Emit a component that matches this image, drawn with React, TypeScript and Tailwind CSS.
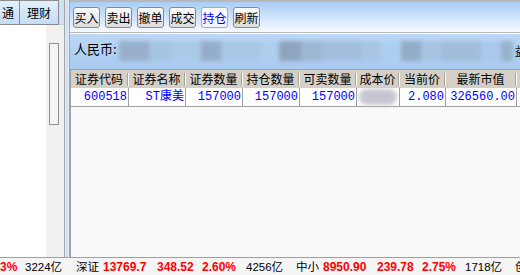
const cjk = "font-['Noto_Sans_CJK_SC',sans-serif]"

const buttons = [
  { label: "买入", active: false },
  { label: "卖出", active: false },
  { label: "撤单", active: false },
  { label: "成交", active: false },
  { label: "持仓", active: true },
  { label: "刷新", active: false },
]

const columns = [
  { title: "证券代码", w: "w-[58px]", value: "600518" },
  { title: "证券名称", w: "w-[57px]", value: "ST康美" },
  { title: "证券数量", w: "w-[57px]", value: "157000" },
  { title: "持仓数量", w: "w-[57px]", value: "157000" },
  { title: "可卖数量", w: "w-[57px]", value: "157000" },
  { title: "成本价", w: "w-[43px]", value: "" },
  { title: "当前价", w: "w-[46px]", value: "2.080" },
  { title: "最新市值", w: "w-[71px]", value: "326560.00" },
]

// blurred account figures in the 人民币 strip
const blurs = [
  { w: "w-[30px]", c: "bg-[#97afcb]" },
  { w: "w-[22px]", c: "bg-[#a6c3e2]" },
  { w: "w-[30px]", c: "bg-[#abc9e8]" },
  { w: "w-[20px]", c: "bg-[#94adcb]" },
  { w: "w-[40px]", c: "bg-[#a9c6e6]" },
  { w: "w-[18px]", c: "bg-[#b0cdee]" },
  { w: "w-[22px]", c: "bg-[#8fa4be]" },
  { w: "w-[20px]", c: "bg-[#9db6d3]" },
  { w: "w-[40px]", c: "bg-[#a3bedc]" },
  { w: "w-[20px]", c: "bg-[#a9c5e4]" },
  { w: "w-[20px]", c: "bg-[#accff1]" },
  { w: "w-[20px]", c: "bg-[#93acc8]" },
  { w: "w-[20px]", c: "bg-[#a6c3e2]" },
  { w: "w-[40px]", c: "bg-[#a2bdda]" },
  { w: "w-[20px]", c: "bg-[#a9c8ea]" },
  { w: "w-[12px]", c: "bg-[#98b2cd]" },
]

const status = [
  { t: "3%", w: "w-[25px]", red: true },
  { t: "3224亿", w: "w-[51px]", red: false },
  { t: "深证", w: "w-[27px]", red: false },
  { t: "13769.7", w: "w-[54px]", red: true },
  { t: "348.52", w: "w-[45px]", red: true },
  { t: "2.60%", w: "w-[44px]", red: true },
  { t: "4256亿", w: "w-[50px]", red: false },
  { t: "中小", w: "w-[27px]", red: false },
  { t: "8950.90", w: "w-[54px]", red: true },
  { t: "239.78", w: "w-[45px]", red: true },
  { t: "2.75%", w: "w-[43px]", red: true },
  { t: "1718亿", w: "w-[50px]", red: false },
  { t: "创", w: "w-[20px]", red: false },
]

export default function App() {
  return (
    <div className="w-[520px] h-[275px] flex flex-col overflow-hidden bg-white font-['Liberation_Sans','Noto_Sans_CJK_SC',sans-serif] text-black">

      <div className="flex h-[257px]">

        {/* left panel */}
        <div className="w-[64px] shrink-0 flex flex-col">
          <div className="h-[25px] flex bg-[#cde2f8] border-b border-[#b9cfe6]">
            <div className={`w-[21px] h-[25px] -ml-[1px] border border-[#8c8c8c] bg-gradient-to-b from-[#e4f0fc] to-[#c4dcf6] flex items-center justify-end pr-[5px] text-[12px] ${cjk}`}>
              通
            </div>
            <div className={`w-[39px] h-[25px] border border-l-0 border-[#8c8c8c] bg-gradient-to-b from-[#e4f0fc] to-[#c4dcf6] flex items-center justify-center text-[12px] ${cjk}`}>
              理财
            </div>
          </div>
          <div className="flex-1 flex">
            <div className="w-[46px] bg-white" />
            <div className="flex-1 bg-[#f2f1f0] pt-[18px] pl-[3px]">
              <div className="w-[10px] h-[82px] border border-[#8e8e8e] bg-[#f4f4f4]" />
            </div>
          </div>
        </div>

        {/* splitter */}
        <div className="w-[6px] shrink-0 border-l border-r border-[#a4a4a4] bg-gradient-to-r from-[#e8f0fa] via-[#c6dbf4] to-[#eaf2fb]" />

        {/* right panel */}
        <div className="flex-1 flex flex-col min-w-0">

          <div className="h-[33px] border-t-2 border-[#b8b8b8] border-b bg-gradient-to-b from-[#a8cdf4] to-[#f6faff] flex items-start gap-[5px] pl-[3px] pt-[5px]">
            {buttons.map((b) => (
              <div
                key={b.label}
                className={`w-[27px] h-[21px] rounded-[3px] border flex items-center justify-center text-[12px] ${cjk} ${
                  b.active
                    ? "border-[#9ab0c8] bg-gradient-to-b from-white to-[#eef3f9] text-[#0000ff]"
                    : "border-[#8a8a8a] bg-gradient-to-b from-[#fbfbfb] to-[#dcdcdc]"
                }`}
              >
                {b.label}
              </div>
            ))}
          </div>

          <div className="h-[36px] bg-gradient-to-b from-[#bcd8f5] to-[#a8cbf0] border-t border-white flex items-start pt-[6px] pl-[4px] overflow-hidden">
            <span className={`text-[13px] leading-[16px] mt-[1px] shrink-0 ${cjk}`}>人民币:</span>
            <div className="flex mt-[1px] ml-[2px] h-[20px] blur-[2px]">
              {blurs.map((b, i) => (
                <div key={i} className={`${b.w} ${b.c} h-full`} />
              ))}
            </div>
            <span className={`shrink-0 ml-[2px] mt-[4px] text-[12px] leading-[14px] ${cjk}`}>益</span>
          </div>

          <div className="flex-1 bg-[#f9f9f9] border-l border-[#a0a0a0] border-t border-t-[#a0a0a0] flex flex-col">

            <div className="h-[18px] flex bg-[#d4d0c8]">
              {columns.map((c) => (
                <div key={c.title} className={`${c.w} shrink-0 flex items-center`}>
                  <span className={`flex-1 text-center text-[12px] leading-[18px] whitespace-nowrap ${cjk}`}>{c.title}</span>
                  <span className="w-[2px] h-[13px] border-l border-[#a8a49c] border-r border-r-white" />
                </div>
              ))}
              <div className="flex-1" />
            </div>

            <div className="h-[19px] flex bg-white border-b border-[#a0a0a0]">
              {columns.map((c) => (
                <div
                  key={c.title}
                  className={`${c.w} shrink-0 border-r border-[#a0a0a0] flex items-center justify-end pr-[1px] text-[#0000ff] text-[12px] whitespace-nowrap font-['Liberation_Mono','Noto_Sans_CJK_SC',monospace]`}
                >
                  {c.value === "" ? (
                    <div className="w-[38px] h-[16px] mr-[1px] rounded-full bg-[#c6c6d2] blur-[2px]" />
                  ) : (
                    c.value
                  )}
                </div>
              ))}
              <div className="flex-1" />
            </div>

          </div>
        </div>
      </div>

      <div className="h-[18px] border-t border-[#a0a0a0] bg-[#f5f5f5] flex items-center overflow-hidden text-[11.5px] leading-[16px]">
        {status.map((s, i) => (
          <span
            key={i}
            className={`${s.w} shrink-0 whitespace-nowrap ${s.red ? "text-[#ff0000] font-bold text-[12px]" : "text-black"}`}
          >
            {s.t}
          </span>
        ))}
      </div>

    </div>
  )
}
